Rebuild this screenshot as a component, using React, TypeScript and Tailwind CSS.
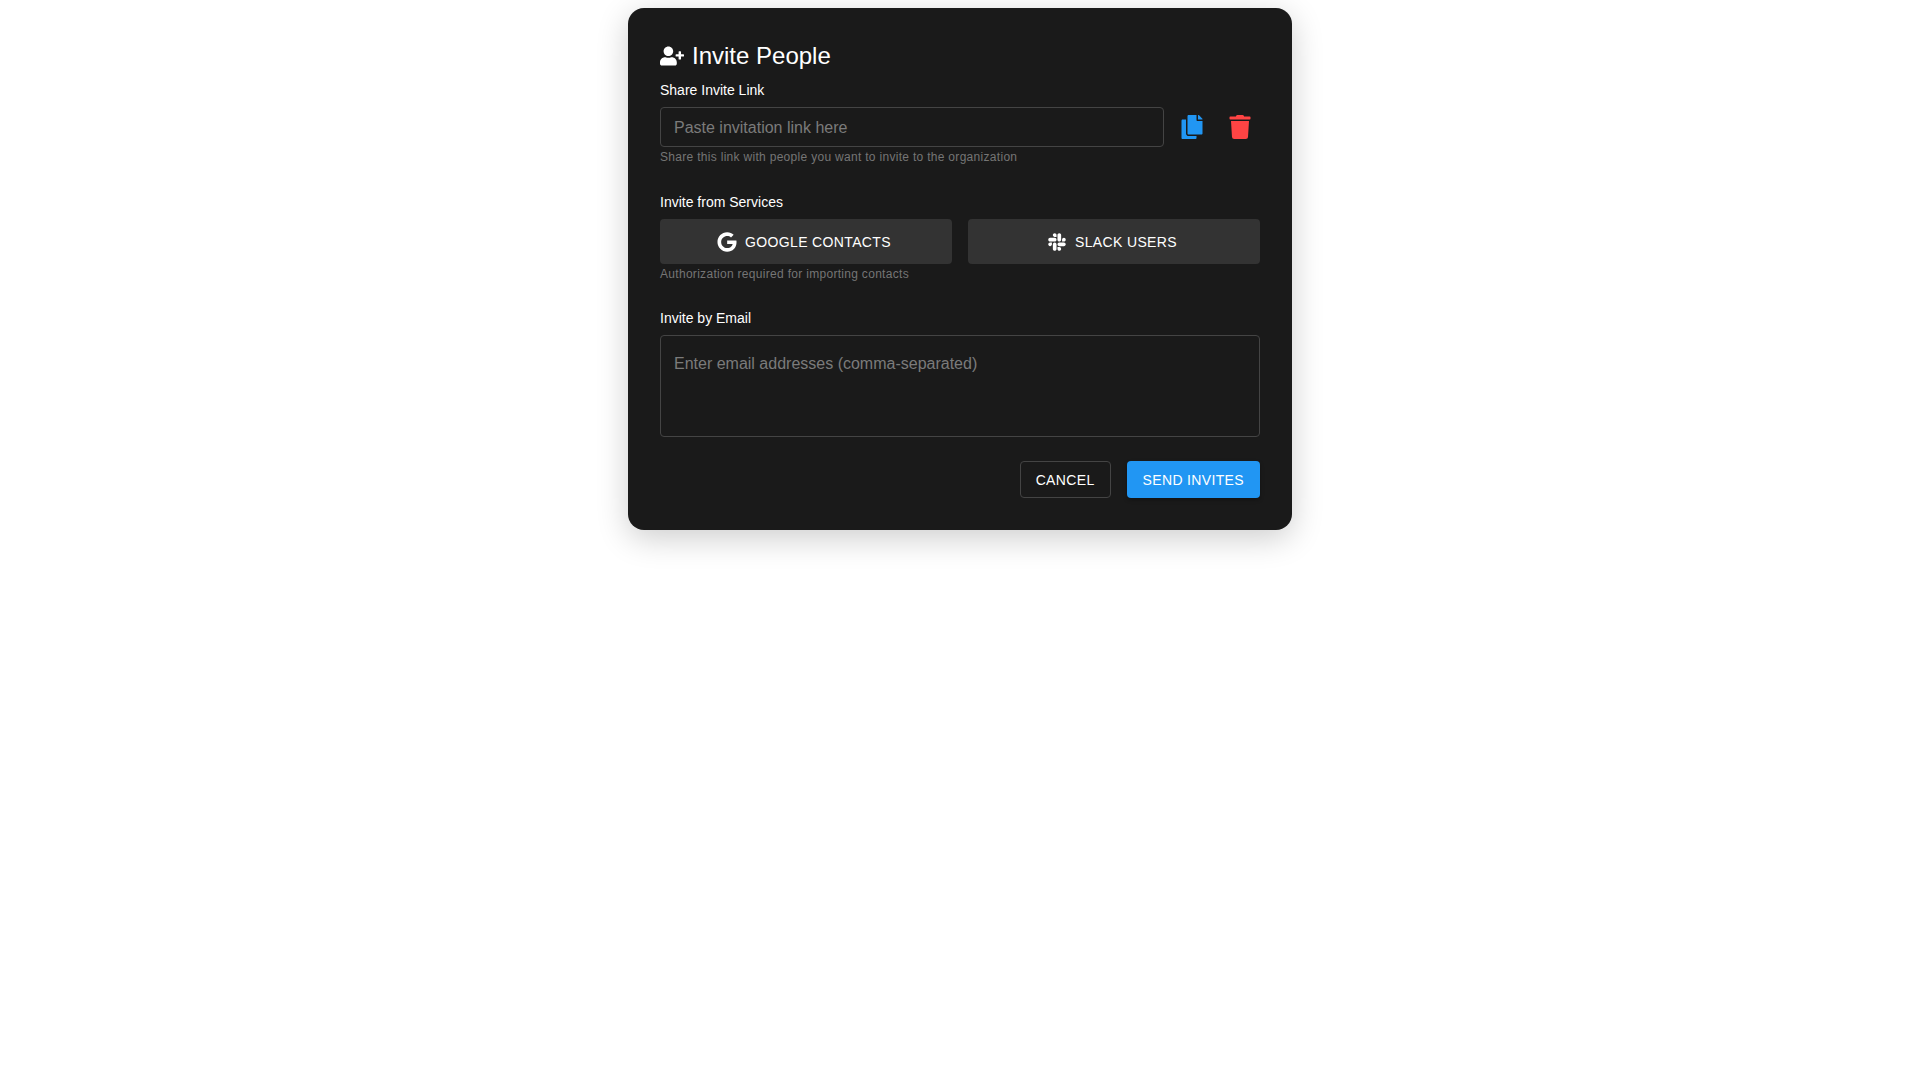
import { useState } from "react";
import { FaCopy, FaGoogle, FaSlack, FaTrash, FaUserPlus } from "react-icons/fa";

const services = [
  { name: "Google Contacts", icon: FaGoogle },
  { name: "Slack Users", icon: FaSlack },
];

const labelClass = "block text-sm leading-[22px] mb-1.5";
const hintClass = "text-xs leading-5 tracking-wide text-[#757575]";
const fieldClass =
  "block w-full min-w-0 rounded border border-[#444444] bg-transparent px-[13px] text-base placeholder:text-[#7b7b7b] outline-none focus:border-[#2196f3]";

export default function App() {
  const [link, setLink] = useState("");
  const [emails, setEmails] = useState("");

  return (
    <main className="min-h-screen p-2 bg-white font-['Liberation_Sans',Arial,sans-serif]">
      <section className="mx-auto w-full max-w-[664px] rounded-2xl bg-[#1a1a1a] p-8 text-white shadow-[0_8px_32px_rgba(0,0,0,0.2)]">
        <h1 className="flex items-center gap-2 mb-[7px] text-2xl leading-8">
          <FaUserPlus />
          Invite People
        </h1>

        {/* Link */}
        <div className="mb-6">
          <label htmlFor="invite-link" className={labelClass}>Share Invite Link</label>
          <div className="flex items-center gap-2">
            <input
              id="invite-link"
              type="text"
              value={link}
              onChange={e => setLink(e.target.value)}
              placeholder="Paste invitation link here"
              className={`${fieldClass} h-10 pt-2 pb-1.5 leading-6`}
            />
            <button
              type="button"
              aria-label="Copy link"
              onClick={() => navigator.clipboard.writeText(link)}
              className="flex size-10 shrink-0 items-center justify-center text-2xl text-[#2196f3]"
            >
              <FaCopy />
            </button>
            <button
              type="button"
              aria-label="Clear link"
              onClick={() => setLink("")}
              className="flex size-10 shrink-0 items-center justify-center text-2xl text-[#ff4444]"
            >
              <FaTrash />
            </button>
          </div>
          <p className={hintClass}>Share this link with people you want to invite to the organization</p>
        </div>

        {/* Services */}
        <div className="mb-[23px]">
          <h2 className={labelClass}>Invite from Services</h2>
          <div className="grid grid-cols-2 gap-4">
            {services.map(s => (
              <button
                key={s.name}
                type="button"
                className="flex h-[45px] items-center justify-center gap-2 rounded bg-[#333333] text-sm tracking-wide uppercase"
              >
                <s.icon className="-ml-1 text-xl" />
                {s.name}
              </button>
            ))}
          </div>
          <p className={hintClass}>Authorization required for importing contacts</p>
        </div>

        {/* Email */}
        <div className="mb-6">
          <label htmlFor="invite-emails" className={labelClass}>Invite by Email</label>
          <textarea
            id="invite-emails"
            value={emails}
            onChange={e => setEmails(e.target.value)}
            placeholder="Enter email addresses (comma-separated)"
            className={`${fieldClass} h-[102px] resize-none py-4 leading-[23px]`}
          />
        </div>

        <div className="flex justify-end gap-4">
          <button
            type="button"
            className="h-[37px] rounded border border-[#444444] px-[15px] text-sm leading-6 tracking-wide uppercase"
          >
            Cancel
          </button>
          <button
            type="button"
            className="h-[37px] rounded bg-[#2196f3] px-4 text-sm leading-6 tracking-wide uppercase shadow-[0_2px_4px_rgba(0,0,0,0.3)]"
          >
            Send Invites
          </button>
        </div>
      </section>
    </main>
  );
}
